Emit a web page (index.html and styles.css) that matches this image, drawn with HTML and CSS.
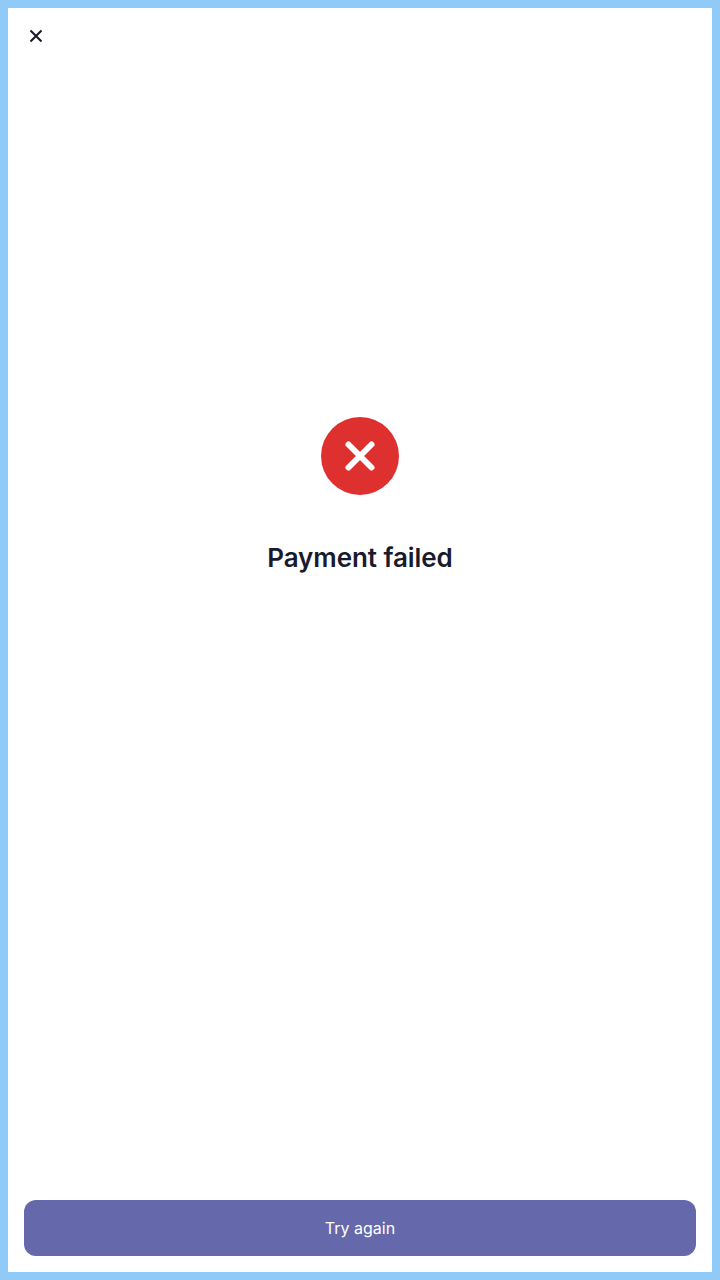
FILE: index.html
```html
<!DOCTYPE html>
<html lang="en">
<head>
<meta charset="utf-8">
<title>Payment failed</title>
<link rel="stylesheet" href="styles.css">
</head>
<body>
<div class="screen">
  <header class="header">
    <button class="close" aria-label="Close">
      <svg width="24" height="24" viewBox="0 0 24 24" fill="none" stroke="currentColor" stroke-width="2.1"><path d="M6.5 6.5 17.5 17.5M17.5 6.5 6.5 17.5"/></svg>
    </button>
  </header>
  <main class="content">
    <svg class="status" width="78" height="78" viewBox="0 0 78 78"><circle cx="39" cy="39" r="39" fill="#df3030"/><path d="M27.5 27.5 50.5 50.5M50.5 27.5 27.5 50.5" stroke="#fff" stroke-width="6" stroke-linecap="round"/></svg>
    <h1 class="title">Payment failed</h1>
  </main>
  <footer class="footer">
    <button class="retry">Try again</button>
  </footer>
</div>
</body>
</html>
```
FILE: styles.css
```css
* { box-sizing: border-box; }
body {
  margin: 0;
  font-family: Inter, "Liberation Sans", sans-serif;
  color: #1a1a2e;
}
.screen {
  display: flex;
  flex-direction: column;
  height: 100vh;
  border: 8px solid #90caf9;
  background: #fff;
}
.header { display: flex; padding: 16px; }
.close {
  display: flex;
  padding: 0;
  border: 0;
  background: none;
  color: inherit;
}
.content {
  flex: 1;
  display: flex;
  flex-direction: column;
  align-items: center;
  padding-top: 353px;
}
.status { display: block; }
.title {
  margin: 46px 0 0;
  font-size: 26px;
  line-height: 34px;
  font-weight: 620;
  letter-spacing: -0.07px;
}
.footer { padding: 16px; }
.retry {
  display: block;
  width: 100%;
  height: 56px;
  padding: 0;
  border: 0;
  border-radius: 12px;
  background: #6568aa;
  color: #fff;
  font: 420 16px/24px Inter, "Liberation Sans", sans-serif;
}
```
